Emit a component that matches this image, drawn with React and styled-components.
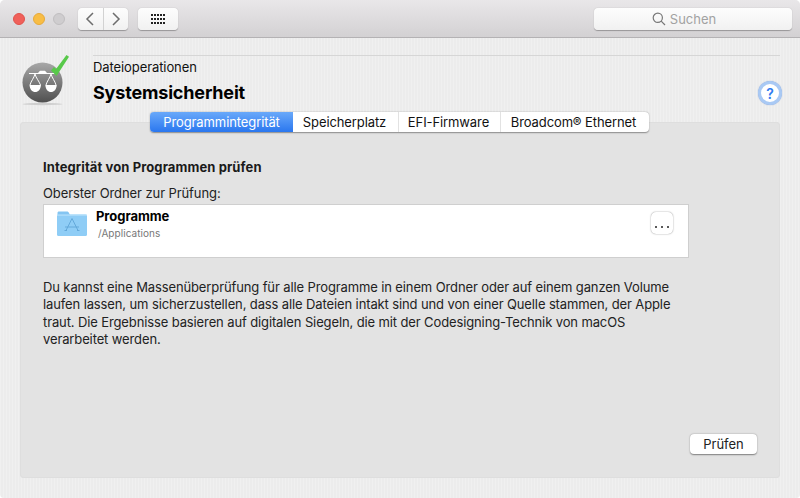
import React from "react";
import styled, { createGlobalStyle } from "styled-components";

const Global = createGlobalStyle`
  html, body { margin: 0; padding: 0; background: #fff; }
  body { font-family: Inter, "Liberation Sans", sans-serif; -webkit-font-smoothing: antialiased; }
  * { box-sizing: border-box; }
`;

const Win = styled.div`
  width: 800px; height: 498px; display: flex; flex-direction: column; overflow: hidden;
  border-radius: 5px 5px 4px 4px;
  background-color: #ececec;
  background-image: repeating-linear-gradient(90deg, rgba(255,255,255,.22) 0 1px, transparent 1px 3px);
`;
const TitleBar = styled.div`
  height: 38px; flex: none; display: flex; align-items: flex-start; padding: 8px 8px 0 13px;
  background: linear-gradient(#e9e7e9, #d3d1d3); border-bottom: 1px solid #b4b2b4;
`;
const Lights = styled.div`display: flex; gap: 8px; margin-top: 5px; margin-right: 13px;`;
const Light = styled.span`
  width: 12px; height: 12px; border-radius: 50%; background: ${p => p.$c}; border: .5px solid ${p => p.$b};
`;
const ToolBtn = styled.div`
  height: 22px; display: flex; align-items: center; justify-content: center; width: ${p => p.$w}px;
  background: linear-gradient(#fdfdfd, #f1f1f1); border-radius: 4px;
  box-shadow: 0 .5px 1px rgba(0,0,0,.3);
  margin-left: ${p => p.$ml || 0}px;
`;
const NavHalf = styled.div`
  flex: 1; height: 100%; display: flex; align-items: center; justify-content: center;
  & + & { border-left: 1px solid #d2d2d2; }
`;
const Search = styled(ToolBtn)`
  margin-left: auto; color: #a2a2a2; font-size: 13px; gap: 4px; padding-right: 18px;
`;
const Body = styled.div`flex: 1; display: flex; flex-direction: column; padding: 0 20px 20px;`;
const Header = styled.div`display: flex; height: 84px; flex: none;`;
const IconCol = styled.div`width: 73px; flex: none; padding-top: 16px; margin-left: -2px;`;
const HeadText = styled.div`
  flex: 1; position: relative; margin-top: 17px; border-top: 1px solid #d6d6d6; padding-top: 3px; margin-left: 2px;
`;
const Sub = styled.div`font-size: 13px; line-height: 17px; color: #111; letter-spacing: -.09px;`;
const Title = styled.div`font-size: 18px; line-height: 22px; font-weight: 700; color: #000; margin-top: 6px; letter-spacing: -.17px;`;
const Help = styled.div`
  position: absolute; right: -2px; top: 25px; width: 24px; height: 24px; border-radius: 50%;
  background: #fff; border: 3px solid #a9c9f4; color: #2f7bf0; font-size: 14px; font-weight: 600;
  display: flex; align-items: center; justify-content: center; box-shadow: 0 0 1px rgba(60,110,200,.6);
`;
const Panel = styled.div`
  flex: 1; background: #e3e3e3; border-radius: 4px; box-shadow: inset 0 0 0 1px #dedede;
  display: flex; flex-direction: column; padding: 0 23px 24px 23px;
`;
const Tabs = styled.div`
  align-self: flex-start; display: flex; height: 20px; margin: -10px 0 0 107px; background: #fff;
  border-radius: 4px; box-shadow: 0 .5px 1.5px rgba(0,0,0,.4); font-size: 13px; line-height: 20px; color: #111;
`;
const Tab = styled.div`
  width: ${p => p.$w}px; text-align: center; white-space: nowrap; letter-spacing: -.1px;
  padding-right: ${p => p.$pr || 0}px;
  border-left: ${p => p.$active || p.$afterActive ? "0" : "1px solid #e2e2e2"};
  ${p => p.$active && `background: linear-gradient(#69a9fa, #2a77ef); color: #fff; border-radius: 4px 0 0 4px;`}
  &:last-child { border-radius: 0 4px 4px 0; }
`;
const Heading = styled.div`font-size: 13px; line-height: 16px; font-weight: 700; color: #1a1a1a; margin-top: 27px; letter-spacing: .1px;`;
const Label = styled.div`font-size: 13px; line-height: 16px; color: #222; margin-top: 10px; letter-spacing: -.09px;`;
const Box = styled.div`
  width: 646px; height: 54px; background: #fff; border: 1px solid #cfcfcf; margin-top: 3px; flex: none;
  display: flex; align-items: flex-start; padding: 6px 15px 0 13px;
`;
const BoxText = styled.div`margin-left: 9px; flex: 1;`;
const BoxName = styled.div`font-size: 13px; line-height: 13px; margin-top: -1px; font-weight: 700; color: #000; letter-spacing: -.05px;`;
const BoxPath = styled.div`font-size: 10px; line-height: 12px; color: #777; margin-top: 4px; margin-left: 2px; letter-spacing: .05px;`;
const More = styled.div`
  width: 22px; height: 22px; border-radius: 5px; background: #fff; margin-top: 1px;
  box-shadow: 0 0 1.5px rgba(0,0,0,.5);
  display: flex; gap: 4px; align-items: center; justify-content: center; padding-top: 8px;
`;
const Dot = styled.span`width: 2px; height: 2px; background: #222; border-radius: 50%;`;
const Para = styled.p`
  margin: 21px 0 0; font-size: 13px; line-height: 17.3px; color: #222; width: 650px; letter-spacing: -.12px;
`;
const Footer = styled.div`margin-top: auto; display: flex; justify-content: flex-end;`;
const Button = styled.div`
  width: 67px; height: 20px; background: #fff; border-radius: 4px; box-shadow: 0 .5px 1.5px rgba(0,0,0,.45);
  font-size: 13px; line-height: 20px; text-align: center; color: #222;
`;

const ScaleIcon = () => (
  <svg width="56" height="56" viewBox="0 0 56 56">
    <defs>
      <linearGradient id="g" x1="0" y1="0" x2="0" y2="1">
        <stop offset="0" stopColor="#a8a8a8" /><stop offset="1" stopColor="#505050" />
      </linearGradient>
    </defs>
    <ellipse cx="24.500" cy="50" rx="20" ry="1.200" fill="#cfcfcf" />
    <circle cx="24.500" cy="28.500" r="20" fill="url(#g)" />
    <path d="M11 19h29v1H11z M20 19l2-2.300h5l2 2.300z" fill="#fff" />
    <g fill="none" stroke="#fff" strokeWidth="1">
      <path d="M17 20C16 24 13 27 12 31 M17 20C18 24 21 27 22.500 31 M33 20C32 24 29 27 28 31 M33 20C34 24 37 27 38 31" />
    </g>
    <path d="M11.500 31h11.500c-.4 4.500-2.700 7-5.750 7s-5.350-2.500-5.750-7z M27.300 31h11.500c-.4 4.500-2.700 7-5.750 7s-5.350-2.500-5.750-7z" fill="#fff" />
    <path d="M33 16.500L36 13l2 2L48.500 1l2.500 1.700L38.500 22z" fill="#58c94a" />
  </svg>
);

const Folder = () => (
  <svg width="30" height="25" viewBox="0 0 30 25">
    <path d="M.5 5V2C.5 1 1 .5 2 .5h8c1 0 1.500.5 2 1.500l1 2H.5z" fill="#84c5f2" />
    <rect x="0" y="3.500" width="30" height="21.500" rx="1.500" fill="#8fcdf6" />
    <rect x="0" y="3.500" width="30" height="1.200" fill="#b4e0fb" />
    <path d="M15 7.500l-6 12M15 7.500l6 12M8 16h14M10 19.500H7.500M20 19.500h2.500" stroke="#64a9da" strokeWidth="1" fill="none" />
  </svg>
);

const Chevron = ({ d }) => (
  <svg width="10" height="16" viewBox="0 0 10 16"><path d={d} fill="none" stroke="#6d6d6d" strokeWidth="1.500" /></svg>
);

const Grid = () => (
  <svg width="15" height="10" viewBox="0 0 15 10" fill="#222">
    {[0, 4, 8].flatMap(y => [0, 3, 6, 9, 12].map(x => <rect key={x + "-" + y} x={x} y={y} width="2" height="2" />))}
  </svg>
);

const Mag = () => (
  <svg width="14" height="14" viewBox="0 0 14 14" fill="none" stroke="#777" strokeWidth="1.200">
    <circle cx="5.800" cy="5.800" r="4.600" /><path d="M9.200 9.200L13 13" />
  </svg>
);

export default function App() {
  return (
    <>
      <Global />
      <Win>
        <TitleBar>
          <Lights>
            <Light $c="#f0605a" $b="#e0524c" />
            <Light $c="#f8bd45" $b="#e6a93a" />
            <Light $c="#cfcdcf" $b="#c0bec0" />
          </Lights>
          <ToolBtn $w={50}>
            <NavHalf><Chevron d="M8 2L2 8l6 6" /></NavHalf>
            <NavHalf><Chevron d="M2 2l6 6-6 6" /></NavHalf>
          </ToolBtn>
          <ToolBtn $w={40} $ml={10}><Grid /></ToolBtn>
          <Search $w={198}><Mag />Suchen</Search>
        </TitleBar>
        <Body>
          <Header>
            <IconCol><ScaleIcon /></IconCol>
            <HeadText>
              <Sub>Dateioperationen</Sub>
              <Title>Systemsicherheit</Title>
              <Help>?</Help>
            </HeadText>
          </Header>
          <Panel>
            <Tabs>
              <Tab $active $w={143}>Programmintegrität</Tab>
              <Tab $afterActive $w={105} $pr={2}>Speicherplatz</Tab>
              <Tab $w={102} $pr={2}>EFI-Firmware</Tab>
              <Tab $w={149} $pr={3}>Broadcom® Ethernet</Tab>
            </Tabs>
            <Heading>Integrität von Programmen prüfen</Heading>
            <Label>Oberster Ordner zur Prüfung:</Label>
            <Box>
              <Folder />
              <BoxText>
                <BoxName>Programme</BoxName>
                <BoxPath>/Applications</BoxPath>
              </BoxText>
              <More><Dot /><Dot /><Dot /></More>
            </Box>
            <Para>
              Du kannst eine Massenüberprüfung für alle Programme in einem Ordner oder auf einem ganzen Volume
              laufen lassen, um sicherzustellen, dass alle Dateien intakt sind und von einer Quelle stammen, der Apple
              traut. Die Ergebnisse basieren auf digitalen Siegeln, die mit der Codesigning-Technik von macOS
              verarbeitet werden.
            </Para>
            <Footer><Button>Prüfen</Button></Footer>
          </Panel>
        </Body>
      </Win>
    </>
  );
}
